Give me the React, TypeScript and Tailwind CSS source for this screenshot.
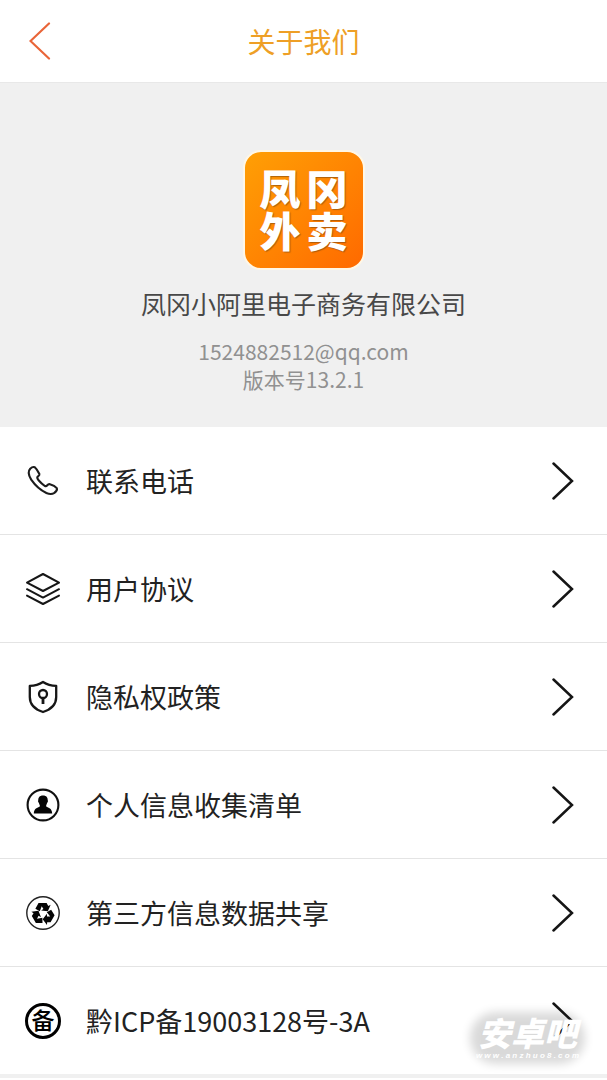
import type { ReactNode } from 'react';

const icon = 'size-9 shrink-0';

function PhoneIcon() {
  return (
    <svg viewBox="0 0 36 36" className={icon} fill="none" stroke="#1c1c1c" strokeWidth="2.1" strokeLinejoin="round" aria-hidden="true">
      <path d="M5.200 5.800C6.300 4.700 8.200 3.500 9.800 4.300C11.600 5.800 13.200 8.600 14.400 11C14.900 12.200 13.600 12.900 12.400 14C11.900 14.800 12.600 16 13.800 17.500C15.600 19.600 17.600 21.500 19.700 22.800C20.800 23.500 21.600 23.100 22.200 22.300C23 21.400 23.800 20.900 24.900 21.200C27.500 21.900 30.400 23.400 31.800 25.100C32.500 26.700 31.200 28.500 29.400 29.900C27 31.500 24.200 31.200 21.400 30C15.800 27.300 9.800 21.800 6.200 16.600C3.600 12.600 2.600 8.600 5.200 5.800Z" />
    </svg>
  );
}

function LayersIcon() {
  return (
    <svg viewBox="0 0 36 36" className={icon} fill="none" stroke="#161616" strokeWidth="2" strokeLinejoin="round" strokeLinecap="round" aria-hidden="true">
      <path d="M18 3L34 11.700L18 20L2 11.700Z" />
      <path d="M2 18.200L18 26.600L34 18.200M2 24.600L18 33L34 24.600" />
    </svg>
  );
}

function ShieldIcon() {
  return (
    <svg viewBox="0 0 36 36" className={icon} fill="none" stroke="#161616" strokeWidth="2.3" strokeLinejoin="round" aria-hidden="true">
      <path d="M18 3C14 5.600 9.500 6.800 4.800 6.900V18C4.800 25.500 10.500 30.600 18 33C25.500 30.600 31.200 25.500 31.200 18V6.900C26.500 6.800 22 5.600 18 3Z" />
      <circle cx="18" cy="15" r="4" />
      <path d="M18 19V25" strokeWidth="2.8" />
    </svg>
  );
}

function PersonIcon() {
  return (
    <svg viewBox="0 0 36 36" className={icon} aria-hidden="true">
      <circle cx="18" cy="18" r="15.4" fill="none" stroke="#111" strokeWidth="2.1" />
      <path fill="#050505" d="M18 8.400C21.600 8.400 22.900 10.600 22.700 13.200C23.300 13.800 22.800 15.300 22.200 15.700C21.700 17 21.600 17.500 21.200 18V19.600C23.500 20.800 27 21.500 27.200 26.600H8.800C9 21.500 12.500 20.800 14.800 19.600V18C14.400 17.500 14.300 17 13.800 15.700C13.200 15.300 12.700 13.800 13.300 13.200C13.100 10.600 14.400 8.400 18 8.400Z" />
    </svg>
  );
}

function RecycleIcon() {
  const arrow = 'M-7.200 -4.700L-4.200 -10.200H3.400L5 -7.400L7.200 -8.500L4.600 -2.300L-1.800 -3.200L0.400 -4.600L-1.200 -7.200L-3 -2.400Z';
  return (
    <svg viewBox="0 0 36 36" className={icon} aria-hidden="true">
      <circle cx="18" cy="18" r="16.2" fill="none" stroke="#222" strokeWidth="1.400" />
      <g transform="translate(18 18.8) scale(1.06)" fill="#050505">
        <path d={arrow} />
        <path d={arrow} transform="rotate(120)" />
        <path d={arrow} transform="rotate(240)" />
      </g>
    </svg>
  );
}

function FilingIcon() {
  return (
    <span className="flex size-9 shrink-0 items-center justify-center rounded-full border-3 border-black pb-1 text-[23px] leading-[22px] font-medium text-black" aria-hidden="true">
      备
    </span>
  );
}

function Chevron() {
  return (
    <svg viewBox="0 0 22 38" className="h-[38px] w-[22px] shrink-0" fill="none" stroke="#151515" strokeWidth="2.5" strokeLinecap="round" aria-hidden="true">
      <path d="M1.500 1.500L20 19L1.500 36.500" />
    </svg>
  );
}

const items: { label: string; icon: ReactNode }[] = [
  { label: '联系电话', icon: <PhoneIcon /> },
  { label: '用户协议', icon: <LayersIcon /> },
  { label: '隐私权政策', icon: <ShieldIcon /> },
  { label: '个人信息收集清单', icon: <PersonIcon /> },
  { label: '第三方信息数据共享', icon: <RecycleIcon /> },
  { label: '黔ICP备19003128号-3A', icon: <FilingIcon /> },
];

export default function App() {
  return (
    <div className="relative bg-white font-['Noto_Sans_CJK_SC',sans-serif] text-[#222]">
      <header className="grid grid-cols-[64px_1fr_64px] items-center border-b border-[#e8e8e8] bg-white py-5">
        <button type="button" aria-label="返回" className="flex justify-center pl-4">
          <svg viewBox="0 0 22 38" className="h-[38px] w-[22px]" fill="none" stroke="#e96538" strokeWidth="2.2" strokeLinecap="round" aria-hidden="true">
            <path d="M20 1.500L1.500 19L20 36.500" />
          </svg>
        </button>
        <h1 className="text-center text-[28px] leading-[42px] text-[#ee9f26]">关于我们</h1>
      </header>

      <section className="flex flex-col items-center bg-[#f0f0f0] pt-[67px] pb-[34px] text-center">
        <div className="flex h-[120px] w-[122px] flex-col items-center justify-center rounded-[18px] border-2 border-[#fff7e6] bg-linear-to-br from-[#ff9f05] to-[#ff6900] pb-1 text-[41px] leading-[42px] font-black text-white text-shadow-[1px_1px_1px_rgb(120_70_20/0.6)]">
          <span className="flex gap-1.5"><span>凤</span><span>冈</span></span>
          <span className="flex gap-1.5"><span>外</span><span>卖</span></span>
        </div>
        <p className="mt-[15px] text-[25px] leading-9 text-[#484848]">凤冈小阿里电子商务有限公司</p>
        <p className="mt-4 text-[21px] leading-7 text-[#919191]">1524882512@qq.com</p>
        <p className="text-[21px] leading-7 text-[#919191]">版本号13.2.1</p>
      </section>

      <nav>
        <ul>
          {items.map((item) => (
            <li key={item.label} className="border-b border-[#e4e4e4] last:border-b-4 last:border-[#f0f0f0]">
              <a href="#" className="flex h-[107px] items-center pr-[33px] pl-[25px]">
                {item.icon}
                <span className="ml-[25px] flex-1 text-[27px] leading-10">{item.label}</span>
                <Chevron />
              </a>
            </li>
          ))}
        </ul>
      </nav>

      <div className="pointer-events-none absolute right-7 bottom-4 flex flex-col items-center text-white italic">
        <div className="absolute inset-x-1 inset-y-2 rounded-full bg-black/15 shadow-[0_0_10px_10px_rgb(0_0_0/0.15)]" />
        <span className="relative text-[33px] leading-9 font-black">安卓吧</span>
        <span className="relative font-['Liberation_Sans',sans-serif] text-[8px] leading-3 font-bold">w w w . a n z h u o 8 . c o m</span>
      </div>
    </div>
  );
}
